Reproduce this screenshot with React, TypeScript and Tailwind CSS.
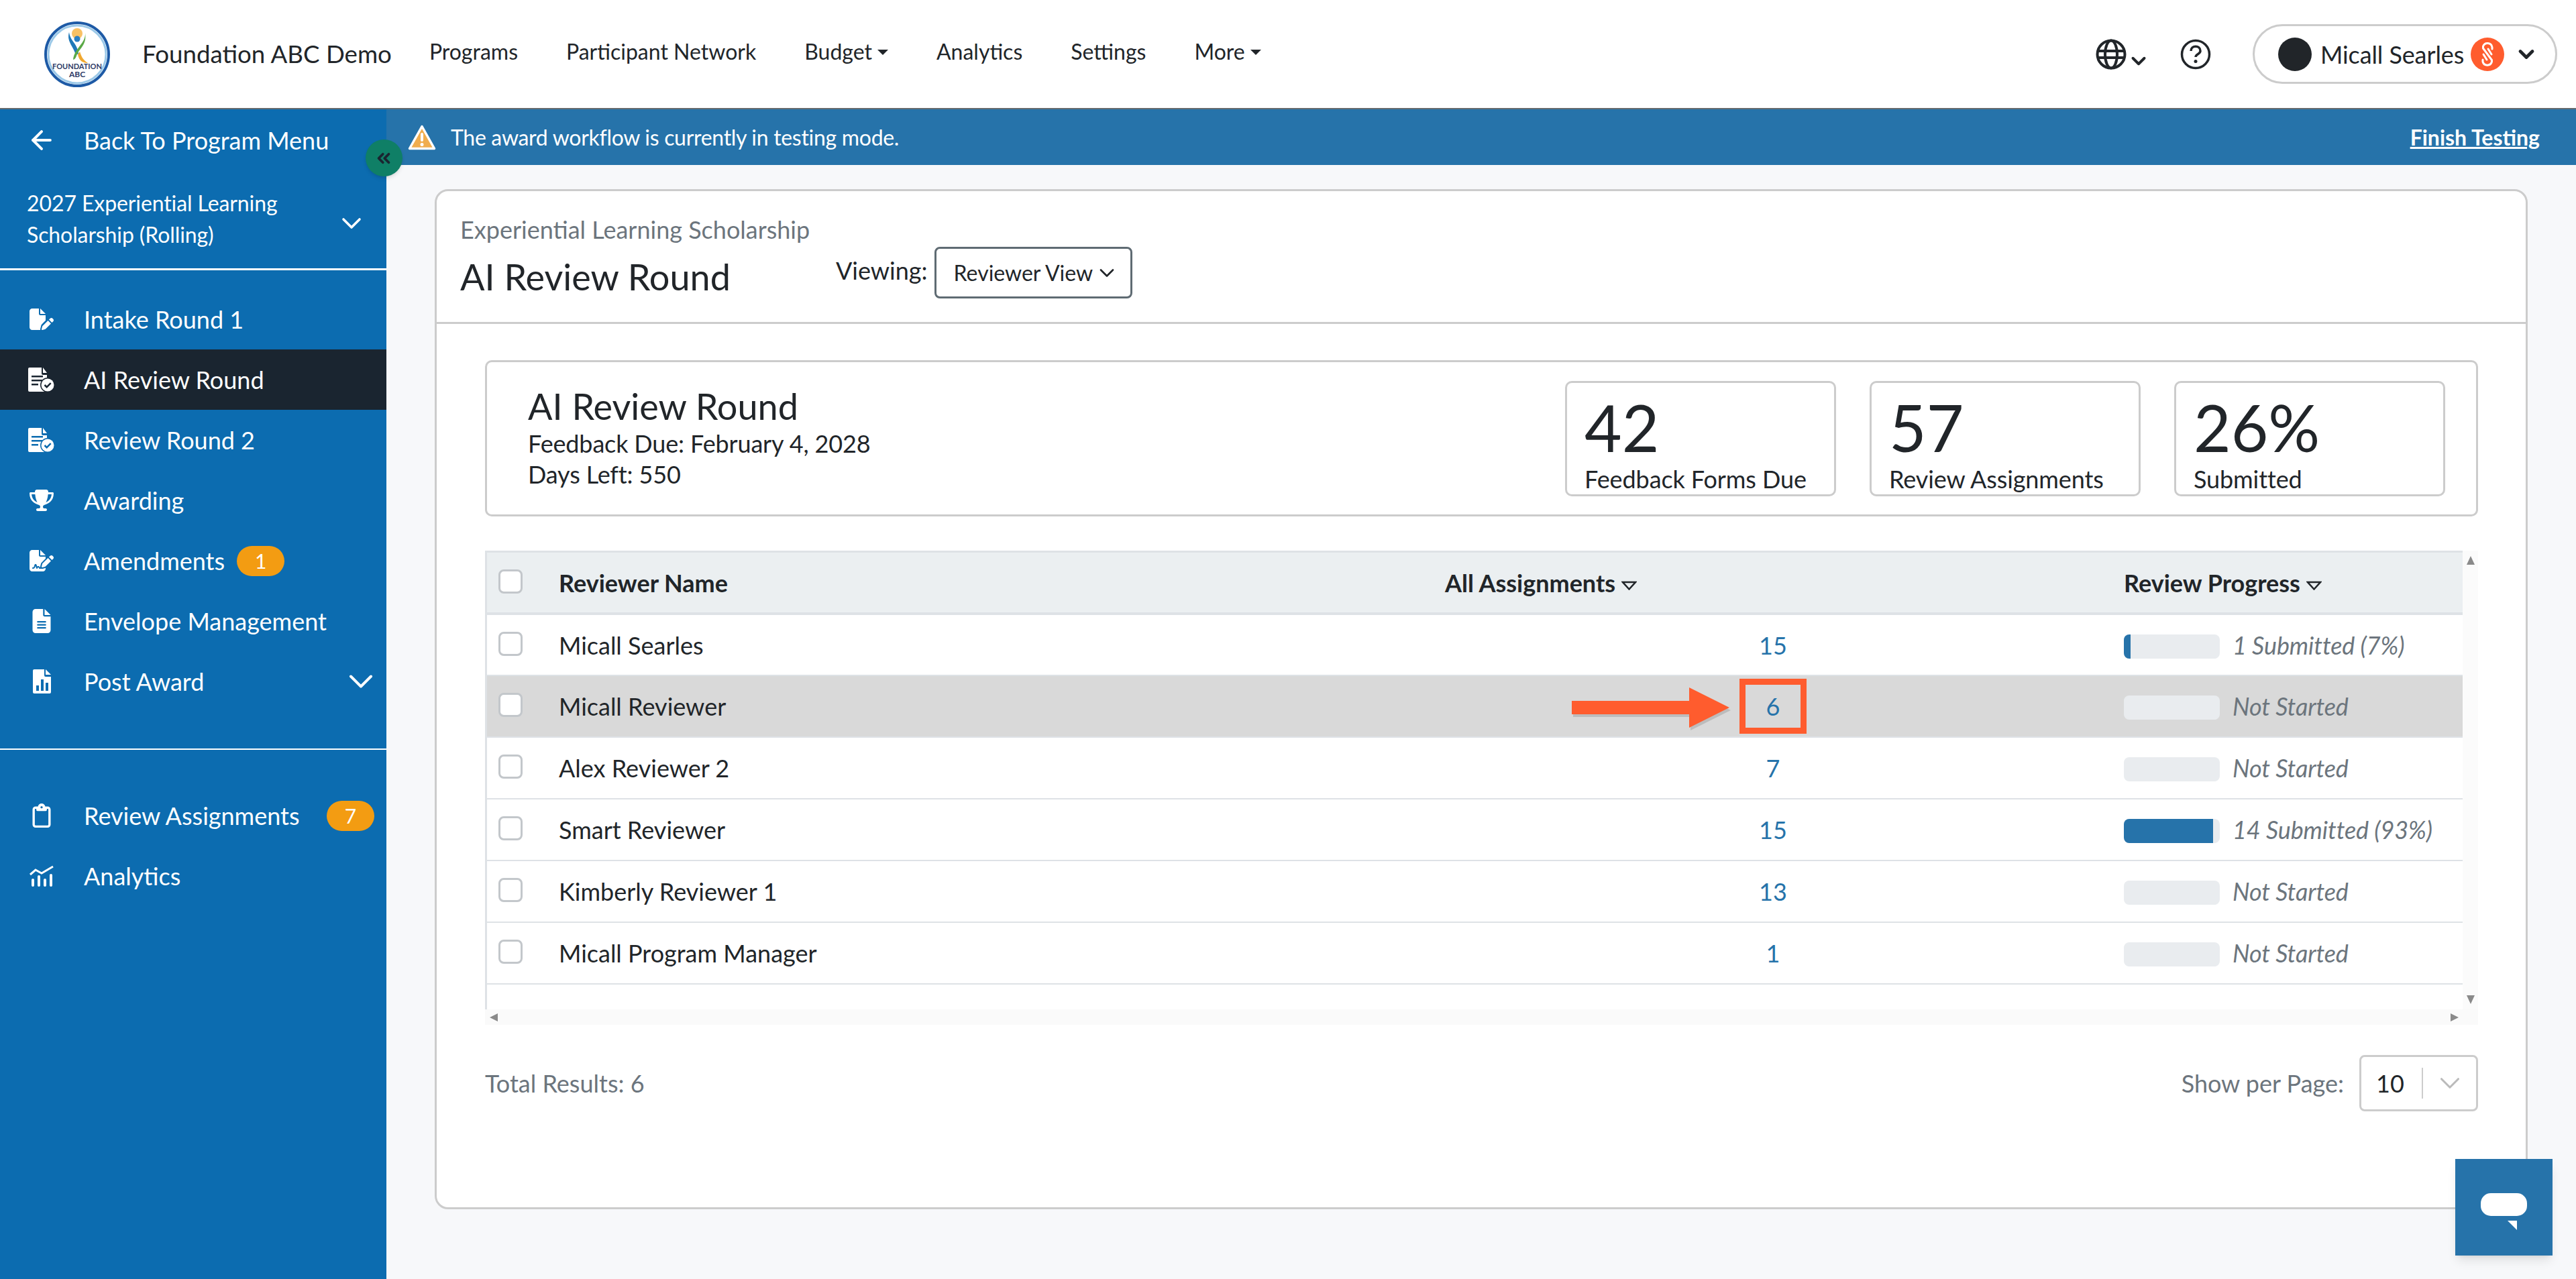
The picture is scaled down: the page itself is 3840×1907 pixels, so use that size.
import { ChevronDown, ArrowLeft, ChevronsLeft } from "lucide-react";
import { FaFilePen, FaFileSignature, FaFileLines, FaTrophy, FaRegClipboard } from "react-icons/fa6";

const rowGrid = "grid grid-cols-[107px_1321px_1012px_1fr] items-center";

const rows = [
  { name: "Micall Searles", count: 15, pct: 7, label: "1 Submitted (7%)" },
  { name: "Micall Reviewer", count: 6, pct: 0, label: "Not Started", marked: true },
  { name: "Alex Reviewer 2", count: 7, pct: 0, label: "Not Started" },
  { name: "Smart Reviewer", count: 15, pct: 93, label: "14 Submitted (93%)" },
  { name: "Kimberly Reviewer 1", count: 13, pct: 0, label: "Not Started" },
  { name: "Micall Program Manager", count: 1, pct: 0, label: "Not Started" },
];

function ReviewIcon({ bg }: { bg: string }) {
  return (
    <svg width="40" height="36" viewBox="0 0 40 36">
      <path d="M2 0h18v9a2 2 0 0 0 2 2h6v23a2 2 0 0 1-2 2H2a2 2 0 0 1-2-2V2a2 2 0 0 1 2-2z" fill="white" />
      <path d="M22 0l6 8h-6z" fill="white" />
      <rect x="5" y="12" width="17" height="2.5" fill={bg} />
      <rect x="5" y="18" width="17" height="2.5" fill={bg} />
      <rect x="5" y="24" width="10" height="2.5" fill={bg} />
      <circle cx="29" cy="26" r="11" fill={bg} />
      <circle cx="29" cy="26" r="9.5" fill="white" />
      <path d="M24.5 26l3.2 3.2 6-6" fill="none" stroke={bg} strokeWidth="2.5" />
    </svg>
  );
}

function PostAwardIcon() {
  return (
    <svg width="27" height="36" viewBox="0 0 27 36">
      <path d="M2 0h15v9a2 2 0 0 0 2 2h8v23a2 2 0 0 1-2 2H2a2 2 0 0 1-2-2V2a2 2 0 0 1 2-2z" fill="white" />
      <path d="M19 0l8 8h-8z" fill="white" />
      <rect x="5" y="24" width="4" height="8" fill="#0c6cb0" />
      <rect x="12" y="15" width="4" height="17" fill="#0c6cb0" />
      <rect x="19" y="20" width="4" height="12" fill="#0c6cb0" />
    </svg>
  );
}

function AnalyticsIcon() {
  return (
    <svg width="36" height="32" viewBox="0 0 36 32">
      <path d="M1 14l8-7 9 5L35 2" fill="none" stroke="white" strokeWidth="3" />
      <rect x="3" y="20" width="4" height="12" rx="2" fill="white" />
      <rect x="12" y="15" width="4" height="17" rx="2" fill="white" />
      <rect x="21" y="20" width="4" height="12" rx="2" fill="white" />
      <rect x="30" y="13" width="4" height="19" rx="2" fill="white" />
    </svg>
  );
}

function NavItem({ icon, label, active, badge, chevron }: { icon: React.ReactNode; label: string; active?: boolean; badge?: number; chevron?: boolean }) {
  return (
    <div className={`h-[90px] flex items-center pl-[42px] text-white text-[36px] ${active ? "bg-[#1a2530]" : ""}`}>
      <span className="w-[40px] flex justify-center shrink-0">{icon}</span>
      <span className="ml-[43px]">{label}</span>
      {badge !== undefined && (
        <span className={`w-[71px] h-[45px] rounded-full bg-[#f39c12] flex items-center justify-center text-[30px] ${badge === 7 ? "ml-auto mr-[18px]" : "ml-[18px]"}`}>
          {badge}
        </span>
      )}
      {chevron && <ChevronDown size={60} strokeWidth={1.6} className="ml-auto mr-[8px]" />}
    </div>
  );
}

function Stat({ value, label }: { value: string; label: string }) {
  return (
    <div className="w-[404px] h-[172px] border-[3px] border-[#ccc] rounded-[10px] pl-[26px] pt-[18px]">
      <div className="text-[96px] leading-[96px] text-[#212529]">{value}</div>
      <div className="text-[36px] leading-[45px] mt-[7px] text-[#212529] tracking-[-0.1px]">{label}</div>
    </div>
  );
}

function Checkbox() {
  return <span className="block w-[36px] h-[36px] mb-[4px] ml-[17px] rounded-[8px] border-[3px] border-[#c3c7cb] bg-white" />;
}

function SortTriangle() {
  return (
    <svg width="23" height="14" viewBox="0 0 23 14" className="inline-block ml-[9px] align-middle">
      <path d="M2 2h19l-9.5 10.5z" fill="none" stroke="#212529" strokeWidth="2.5" />
    </svg>
  );
}

function Triangle({ d, w, h }: { d: string; w: number; h: number }) {
  return (
    <svg width={w} height={h} viewBox={`0 0 ${w} ${h}`}>
      <path d={d} fill="#8a8a8a" />
    </svg>
  );
}

export default function App() {
  return (
    <div className="relative h-[1907px] flex flex-col overflow-hidden bg-[#f7f8fa] text-[#212529] font-['Lato',sans-serif]">
      <header className="h-[163px] shrink-0 bg-white border-b-[2px] border-[#666b6f] flex items-center">
        <svg width="100" height="100" viewBox="0 0 100 100" className="ml-[65px]">
          <circle cx="50" cy="50" r="47" fill="white" stroke="#1d5aa6" strokeWidth="4" />
          <circle cx="50" cy="50" r="43" fill="none" stroke="#9cc9e8" strokeWidth="3" />
          <circle cx="50" cy="19" r="8" fill="#f5a623" opacity="0.7" />
          <circle cx="50" cy="27" r="4.5" fill="#2b7fc3" />
          <path d="M38 17c2 14 12 16 14 32l-4 2c-4-14-14-20-10-34z" fill="#1f78b8" />
          <path d="M62 18c1 16-16 22-18 40 5-1 4-6 8-12 6-8 12-14 10-28z" fill="#5aa946" />
          <path d="M54 46c2 6 4 12 12 17-6 0-13-2-15-13z" fill="#f0a830" />
          <text x="50" y="72" textAnchor="middle" fontSize="11" fontWeight="700" fill="#2d3a66" className="font-['Lato',sans-serif]">FOUNDATION</text>
          <text x="50" y="84" textAnchor="middle" fontSize="12" fontWeight="700" fill="#2d3a66" className="font-['Lato',sans-serif]">ABC</text>
        </svg>
        <span className="ml-[47px] text-[36.7px]">Foundation ABC Demo</span>
        <nav className="flex items-center text-[32px] ml-[56px] gap-[72px] -mt-[8px]">
          <span>Programs</span>
          <span>Participant Network</span>
          <span className="flex items-center">Budget<span className="ml-[8px] mt-[3px] border-x-[8px] border-x-transparent border-t-[8px] border-t-[#212529]" /></span>
          <span>Analytics</span>
          <span>Settings</span>
          <span className="flex items-center">More<span className="ml-[8px] mt-[3px] border-x-[8px] border-x-transparent border-t-[8px] border-t-[#212529]" /></span>
        </nav>
        <div className="ml-auto flex items-center">
          <svg width="46" height="46" viewBox="0 0 46 46" fill="none" stroke="#212529" strokeWidth="4">
            <circle cx="23" cy="23" r="20.5" />
            <ellipse cx="23" cy="23" rx="9" ry="20.5" />
            <path d="M3 18h40M3 28h40" />
          </svg>
          <ChevronDown size={34} strokeWidth={2.8} className="mt-[20px] ml-[1px] -mr-[7px]" />
          <svg width="46" height="46" viewBox="0 0 46 46" fill="none" className="ml-[52px]">
            <circle cx="23" cy="23" r="20.5" stroke="#212529" strokeWidth="3.5" />
            <path d="M16 18c0-9 14-9 14 0 0 5-7 4.500-7 9" stroke="#212529" strokeWidth="3.500" />
            <circle cx="23" cy="33.500" r="2.500" fill="#212529" />
          </svg>
          <div className="ml-[62px] mr-[28px] w-[454px] h-[89px] rounded-full border-[3px] border-[#ccc] flex items-center pl-[35px]">
            <span className="w-[50px] h-[50px] rounded-full bg-[#212529]" />
            <span className="ml-[13px] text-[36px] tracking-[-0.1px]">Micall Searles</span>
            <span className="ml-[10px] w-[50px] h-[50px] rounded-full bg-[#ff5c2e] flex items-center justify-center">
              <svg width="26" height="40" viewBox="0 0 26 40" fill="none" stroke="white" strokeWidth="3" strokeLinecap="round">
                <path d="M20 12V9.500A7 7 0 0 0 6.500 8V11L19.500 28.500V31A7 7 0 0 1 6 31V28" />
                <path d="M14 12l5 8M12 28l-5-8" />
              </svg>
            </span>
            <ChevronDown size={36} strokeWidth={3.2} className="ml-[15px]" />
          </div>
        </div>
      </header>

      <div className="flex flex-1 min-h-0">
        <aside className="relative w-[576px] shrink-0 bg-[#0c6cb0] text-white">
          <div className="h-[92px] flex items-center pl-[40px] text-[36px]">
            <ArrowLeft size={44} strokeWidth={2.2} />
            <span className="ml-[41px]">Back To Program Menu</span>
          </div>
          <div className="h-[148px] border-b-[3px] border-white flex items-center pl-[40px] pr-[28px]">
            <div className="text-[32px] leading-[47px] w-[440px] -mt-[4px] tracking-[-0.1px]">2027 Experiential Learning Scholarship (Rolling)</div>
            <ChevronDown size={48} strokeWidth={1.800} className="ml-auto mt-[10px]" />
          </div>
          <div className="pt-[28px]">
            <NavItem icon={<FaFilePen size={36} />} label="Intake Round 1" />
            <NavItem icon={<ReviewIcon bg="#1a2530" />} label="AI Review Round" active />
            <NavItem icon={<ReviewIcon bg="#0c6cb0" />} label="Review Round 2" />
            <NavItem icon={<FaTrophy size={36} />} label="Awarding" />
            <NavItem icon={<FaFileSignature size={36} />} label="Amendments" badge={1} />
            <NavItem icon={<FaFileLines size={36} />} label="Envelope Management" />
            <NavItem icon={<PostAwardIcon />} label="Post Award" chevron />
          </div>
          <div className="mt-[55px] border-t-[2px] border-white pt-[53px]">
            <NavItem icon={<FaRegClipboard size={36} />} label="Review Assignments" badge={7} />
            <NavItem icon={<AnalyticsIcon />} label="Analytics" />
          </div>
          <button className="absolute left-[545px] top-[45px] w-[55px] h-[55px] rounded-full bg-[#0f7f66] shadow-md flex items-center justify-center z-10">
            <ChevronsLeft size={30} strokeWidth={3} className="text-[#1a2530] -ml-[2px]" />
          </button>
        </aside>

        <main className="flex-1 min-w-0 flex flex-col">
          <div className="h-[83px] bg-[#2673aa] text-white flex items-center pl-[32px] pr-[54px] text-[32px]">
            <svg width="42" height="38" viewBox="0 0 42 38">
              <path d="M21 2.500L39.500 35.500H2.500z" fill="#f0ad4e" stroke="white" strokeWidth="3.500" strokeLinejoin="round" />
              <rect x="19" y="12" width="4" height="13" rx="2" fill="white" />
              <circle cx="21" cy="29.500" r="2.500" fill="white" />
            </svg>
            <span className="ml-[22px] tracking-[-0.3px]">The award workflow is currently in testing mode.</span>
            <span className="ml-auto font-bold underline">Finish Testing</span>
          </div>

          <div className="px-[72px] pt-[36px]">
            <div className="h-[1521px] bg-white border-[3px] border-[#ccc] rounded-[20px]">
              <div className="h-[198px] border-b-[3px] border-[#ccc] pl-[35px] pt-[35px]">
                <div className="text-[36px] leading-[45px] text-[#6c757d]">Experiential Learning Scholarship</div>
                <div className="flex items-start">
                  <h1 className="text-[54px] leading-[67px] mt-[14px] w-[400px] whitespace-nowrap">AI Review Round</h1>
                  <span className="ml-[160px] text-[36px] leading-[45px] mt-[16px]">Viewing:</span>
                  <div className="ml-[10px] mt-[3px] w-[295px] h-[77px] rounded-[8px] border-[3px] border-[#5f6b73] flex items-center pl-[26px] text-[32px]">
                    Reviewer View
                    <ChevronDown size={36} strokeWidth={1.800} className="ml-[3px]" />
                  </div>
                </div>
              </div>

              <div className="pl-[72px] pr-[71px] pt-[54px]">
                <div className="h-[233px] border-[3px] border-[#ccc] rounded-[10px] flex items-center pl-[61px] pr-[46px]">
                  <div className="-mt-[6px] w-[600px]">
                    <div className="text-[54px] leading-[67px]">AI Review Round</div>
                    <div className="text-[36px] leading-[45px] tracking-[-0.15px]">Feedback Due: February 4, 2028</div>
                    <div className="text-[36px] leading-[46px] tracking-[-0.15px]">Days Left: 550</div>
                  </div>
                  <div className="ml-auto flex gap-[50px]">
                    <Stat value="42" label="Feedback Forms Due" />
                    <Stat value="57" label="Review Assignments" />
                    <Stat value="26%" label="Submitted" />
                  </div>
                </div>

                <div className="mt-[51px]">
                  <div className="flex h-[684px]">
                    <div className="w-[2948px] border-l-[3px] border-t-[3px] border-[#dee2e6]">
                      <div className={`${rowGrid} h-[93px] bg-[#ebeff1] border-b-[4px] border-[#dee2e6] text-[36px] font-bold`}>
                        <Checkbox />
                        <span>Reviewer Name</span>
                        <span>All Assignments<SortTriangle /></span>
                        <span>Review Progress<SortTriangle /></span>
                      </div>
                      {rows.map((row, index) => (
                        <div key={row.name} className={`${rowGrid} ${index === 0 ? "h-[91px]" : "h-[92px]"} border-b-[2px] border-[#dee2e6] text-[36px] ${row.marked ? "bg-[#d9d9d9]" : "bg-white"}`}>
                          <Checkbox />
                          <span>{row.name}</span>
                          <div className="pr-[34px] text-center">
                            <span className="relative text-[#2673aa]">
                              {row.count}
                              {row.marked && (
                                <>
                                  <span className="absolute left-1/2 top-1/2 -translate-x-1/2 -translate-y-1/2 w-[100px] h-[82px] border-[9px] border-[#ff5c2e]" />
                                  <svg width="238" height="66" viewBox="0 0 238 66" className="absolute right-[72px] -top-[6px] max-w-none">
                                    <path d="M0 21h175V1l60 30-60 30V41H0z" fill="#888" opacity="0.35" transform="translate(2 3)" />
                                    <path d="M0 20h175V0l60 30-60 30V40H0z" fill="#ff5c2e" />
                                  </svg>
                                </>
                              )}
                            </span>
                          </div>
                          <div className="flex items-center">
                            <div className="w-[143px] h-[36px] rounded-[8px] bg-[#e9ecef] overflow-hidden mt-[4px]">
                              <div className="h-full bg-[#2673aa]" style={{ width: `${row.pct}%` }} />
                            </div>
                            <span className="ml-[19px] italic text-[#6c757d] tracking-[-0.1px]">{row.label}</span>
                          </div>
                        </div>
                      ))}
                    </div>
                    <div className="flex-1 bg-[#fbfbfb] flex flex-col justify-between items-center py-[8px]">
                      <Triangle d="M7 0l6 13H1z" w={14} h={14} />
                      <Triangle d="M1 1h12L7 14z" w={14} h={14} />
                    </div>
                  </div>
                  <div className="h-[23px] bg-[#fafafa] flex items-center justify-between pl-[6px] pr-[28px]">
                    <Triangle d="M13 1v12L1 7z" w={14} h={14} />
                    <Triangle d="M1 1v12l12-6z" w={14} h={14} />
                  </div>
                </div>

                <div className="mt-[45px] flex items-center justify-between">
                  <span className="text-[36px] text-[#6c757d]">Total Results: 6</span>
                  <div className="flex items-center">
                    <span className="text-[36px] text-[#6c757d]">Show per Page:</span>
                    <div className="ml-[23px] w-[177px] h-[84px] rounded-[8px] border-[3px] border-[#ccc] flex items-center pl-[22px] text-[36px]">
                      <span className="w-[68px]">10</span>
                      <span className="w-[2px] h-[46px] bg-[#ccc]" />
                      <ChevronDown size={50} strokeWidth={1.500} className="ml-[15px] text-[#bbb] shrink-0" />
                    </div>
                  </div>
                </div>
              </div>
            </div>
          </div>
        </main>
      </div>

      <div className="absolute left-[3660px] top-[1728px] w-[145px] h-[144px] bg-[#2673aa] shadow-lg">
        <svg width="70" height="56" viewBox="0 0 70 56" className="absolute left-[38px] top-[51px]">
          <rect x="0" y="0" width="69" height="34" rx="15" fill="white" />
          <path d="M40 41l14 0v14z" fill="white" />
        </svg>
      </div>
    </div>
  );
}
